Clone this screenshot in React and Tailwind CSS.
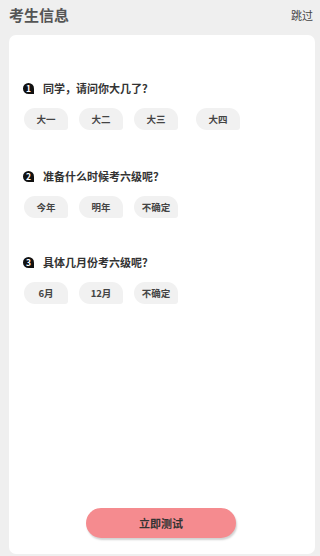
import React from "react";

const font = { fontFamily: '"Noto Sans CJK SC", "Noto Sans", sans-serif' };

function Chip({ label, extra = "" }) {
  return (
    <div
      className={`h-[22px] w-[44px] flex items-center justify-center bg-[#f1f1f1] rounded-[11px] rounded-br-[3px] text-[9.5px] font-bold text-[#444] ${extra}`}
    >
      {label}
    </div>
  );
}

function Question({ n, title, options, className = "" }) {
  return (
    <div className={className}>
      <div className="flex items-center h-[14px] ml-[14px]">
        <div className="w-[11px] h-[11px] bg-[#111] rounded-full rounded-br-[2px] flex items-center justify-center text-white text-[8.5px] font-bold leading-none">
          {n}
        </div>
        <div className="ml-[9px] text-[11px] font-bold text-[#333] leading-none">{title}</div>
      </div>
      <div className="flex mt-[13px] ml-[15px] gap-[11px]">
        {options.map((o, i) => (
          <Chip key={o} label={o} extra={i === 3 ? "ml-[7px]" : ""} />
        ))}
      </div>
    </div>
  );
}

export default function App() {
  return (
    <div className="w-[320px] h-[556px] bg-[#efefef] overflow-hidden flex flex-col" style={font}>
      <div className="h-[35px] flex items-start justify-between px-[9px]">
        <div className="mt-[5px] text-[15px] font-bold text-[#555] leading-[20px]">考生信息</div>
        <div className="mt-[8px] mr-[-2px] text-[11px] text-[#444] leading-[14px]">跳过</div>
      </div>
      <div className="ml-[9px] mr-[5px] h-[519px] bg-white rounded-[7px] flex flex-col">
        <Question n="1" title="同学，请问你大几了？" options={["大一", "大二", "大三", "大四"]} className="mt-[46px]" />
        <Question n="2" title="准备什么时候考六级呢？" options={["今年", "明年", "不确定"]} className="mt-[39px]" />
        <Question n="3" title="具体几月份考六级呢？" options={["6月", "12月", "不确定"]} className="mt-[37px]" />
        <div className="flex-1" />
        <div className="flex justify-center mb-[16px] pr-[2px]">
          <div className="w-[150px] h-[30px] bg-[#f58b8f] rounded-full flex items-center justify-center text-[11px] font-bold text-[#333] shadow-[1px_2px_2px_rgba(0,0,0,0.18)]">
            立即测试
          </div>
        </div>
      </div>
    </div>
  );
}
